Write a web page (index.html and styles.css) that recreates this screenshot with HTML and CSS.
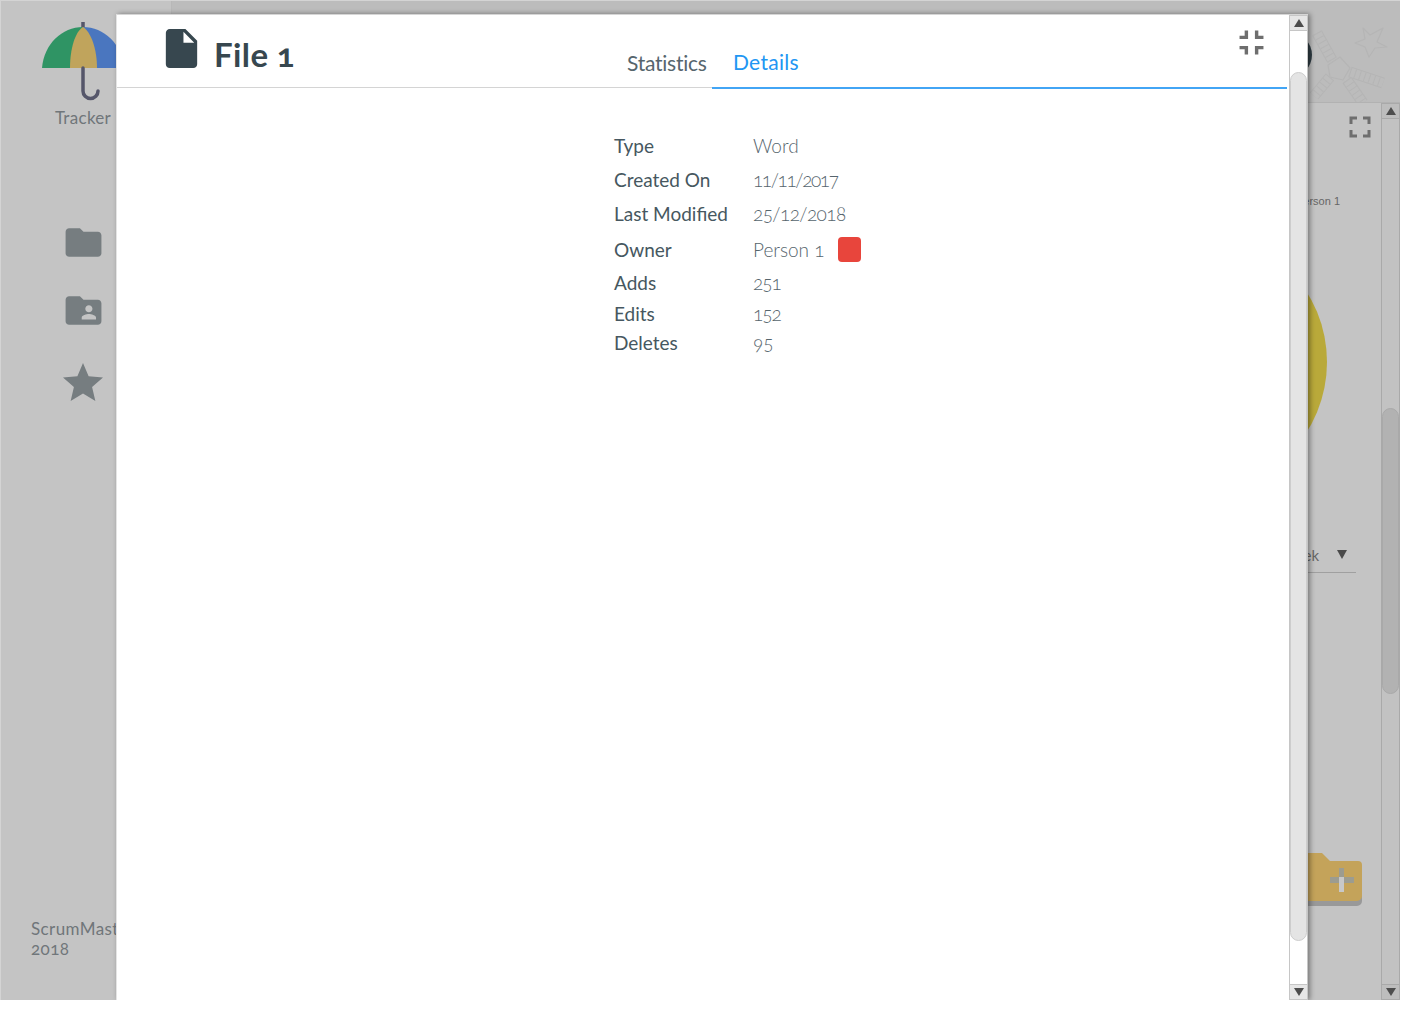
FILE: index.html
```html
<!DOCTYPE html>
<html lang="en">

<head>
    <meta charset="UTF-8">
    <title>Tracker</title>
    <link rel="stylesheet" href="styles.css">
</head>

<body>
    <div class="page">
        <aside class="sidebar">
            <div class="brand">
                <svg class="umbrella" viewBox="0 0 84 80">
                    <path d="M41 0V8" class="handle" />
                    <path d="M0 46C2 22 20 5 41 5L41 46Z" fill="#2f9464" />
                    <path d="M82 46C80 22 62 5 41 5L41 46Z" fill="#4a76bf" />
                    <path d="M28 46C28 27 33 10 41 5C49 10 55 27 55 46Z" fill="#c0a45c" />
                    <path d="M41 46V69a7.5 7.5 0 0 0 15 0" class="handle" />
                </svg>
                <div class="brand-name">Tracker</div>
            </div>
            <nav class="side-nav">
                <svg class="nav-icon" viewBox="0 0 24 24"><path d="M10 4H4c-1.1 0-1.99.9-1.99 2L2 18c0 1.1.9 2 2 2h16c1.1 0 2-.9 2-2V8c0-1.1-.9-2-2-2h-8l-2-2z" /></svg>
                <svg class="nav-icon" viewBox="0 0 24 24"><path d="M20 6h-8l-2-2H4c-1.1 0-1.99.9-1.99 2L2 18c0 1.1.9 2 2 2h16c1.1 0 2-.9 2-2V8c0-1.1-.9-2-2-2zm-5 3c1.1 0 2 .9 2 2s-.9 2-2 2-2-.9-2-2 .9-2 2-2zm4 8h-8v-1c0-1.33 2.67-2 4-2s4 .67 4 2v1z" /></svg>
                <svg class="nav-icon star" viewBox="0 0 24 24"><path d="M12 17.27L18.18 21l-1.64-7.03L22 9.24l-7.19-.61L12 2 9.19 8.63 2 9.24l5.46 4.73L5.82 21z" /></svg>
            </nav>
            <div class="copyright">ScrumMaster<br>2018</div>
        </aside>

        <main class="main">
            <header class="topbar">
                <div class="avatar"></div>
                <svg class="doodle" viewBox="0 0 85 82">
                    <path class="rail" d="M7 13L22 40M40 52L73 63M37 60L53 83M20 57L4 76" />
                    <path class="rail-inner" d="M7 13L22 40M40 52L73 63M37 60L53 83M20 57L4 76" />
                    <path class="rung" d="M7 13L22 40M40 52L73 63M37 60L53 83M20 57L4 76" />
                    <path class="outline" d="M30 37L40 48L33 60L20 57L18 45Z" />
                    <path class="outline" d="M53 8L60 15L73 8L67 22L77 27L65 28L59 37L55 27L45 23L55 19Z" />
                </svg>
            </header>
            <div class="main-body">
                <section class="dashboard">
                    <svg class="expand-icon" viewBox="0 0 24 24"><path d="M7 14H5v5h5v-2H7v-3zm-2-4h2V7h3V5H5v5zm12 7h-3v2h5v-5h-2v3zM14 5v2h3v3h2V5h-5z" /></svg>
                    <div class="legend">Person 1</div>
                    <div class="pie"></div>
                    <div class="period">
                        <span>Last week</span>
                        <span class="period-arrow"></span>
                    </div>
                    <svg class="add-folder" viewBox="0 0 72 53">
                        <path d="M6 5H32L41 13H68a4 4 0 0 1 4 4V48a5 5 0 0 1 -5 5H6Z" fill="#999" />
                        <path d="M6 0H32L40 8H68a4 4 0 0 1 4 4V43a5 5 0 0 1 -5 5H6Z" fill="#c4a35a" />
                        <rect x="49" y="15" width="5" height="24" fill="#c8c8c8" />
                        <rect x="49" y="15" width="5" height="9" fill="#9c9c90" />
                        <rect x="40" y="24" width="9" height="6" fill="#9c9c90" />
                        <rect x="54" y="24" width="10" height="6" fill="#9c9c90" />
                    </svg>
                </section>
                <div class="scrollbar scrollbar-back">
                    <div class="scroll-btn"><span class="arrow-up"></span></div>
                    <div class="scroll-track">
                        <div class="scroll-thumb"></div>
                    </div>
                    <div class="scroll-btn"><span class="arrow-down"></span></div>
                </div>
            </div>
        </main>

        <div class="modal">
            <div class="modal-content">
                <header class="modal-header">
                    <div class="modal-title">
                        <svg class="file-icon" viewBox="0 0 24 24"><path d="M6 2c-1.1 0-1.99.9-1.99 2L4 20c0 1.1.89 2 1.99 2H18c1.1 0 2-.9 2-2V8l-6-6H6zm7 7V3.5L18.5 9H13z" /></svg>
                        <h1>File 1</h1>
                    </div>
                    <div class="tabs">
                        <button class="tab">Statistics</button>
                        <button class="tab active">Details</button>
                    </div>
                    <svg class="collapse-icon" viewBox="0 0 24 24"><path d="M5 16h3v3h2v-5H5v2zm3-8H5v2h5V5H8v3zm6 11h2v-3h3v-2h-5v5zm2-11V5h-2v5h5V8h-3z" /></svg>
                </header>
                <table class="details">
                    <tr class="row-type"><th>Type</th><td>Word</td></tr>
                    <tr class="row-created"><th>Created On</th><td>11/11/2017</td></tr>
                    <tr class="row-modified"><th>Last Modified</th><td>25/12/2018</td></tr>
                    <tr class="row-owner"><th>Owner</th><td><div class="owner">Person 1<span class="owner-color"></span></div></td></tr>
                    <tr class="row-adds"><th>Adds</th><td>251</td></tr>
                    <tr class="row-edits"><th>Edits</th><td>152</td></tr>
                    <tr class="row-deletes"><th>Deletes</th><td>95</td></tr>
                </table>
            </div>
            <div class="scrollbar scrollbar-modal">
                <div class="scroll-btn"><span class="arrow-up"></span></div>
                <div class="scroll-track">
                    <div class="scroll-thumb"></div>
                </div>
                <div class="scroll-btn"><span class="arrow-down"></span></div>
            </div>
        </div>
    </div>
</body>

</html>
```
FILE: styles.css
```css
:root {
    --backdrop: #c4c4c4;
    --backdrop-dark: #bcbcbc;
    --doodle: #b5b5b5;
    --icon-grey: #767d80;
    --ink: #37474f;
    --ink-label: #465760;
    --ink-light: #56656d;
    --blue: #42a5f5;
    --tab-blue: #2196f3;
}

* {
    box-sizing: border-box;
}

html,
body {
    margin: 0;
    height: 100%;
    background: #fff;
    overflow: hidden;
}

body {
    font-family: Lato, "Open Sans", sans-serif;
    font-feature-settings: "onum";
}

.page {
    position: relative;
    display: flex;
    width: 1400px;
    height: 1000px;
    background: var(--backdrop);
    border-left: 1px solid #d4d4d4;
    border-top: 1px solid #d4d4d4;
    overflow: hidden;
}

/* left menu, mostly covered by the modal */
.sidebar {
    display: flex;
    flex-direction: column;
    align-items: center;
    width: 171px;
    flex-shrink: 0;
    padding: 21px 6px 0 0;
    border-right: 1px solid #b8b8b8;
}

.brand {
    display: flex;
    flex-direction: column;
    align-items: center;
}

.umbrella {
    width: 84px;
    height: 80px;
    margin-left: 2px;
}

.handle {
    fill: none;
    stroke: #55566a;
    stroke-width: 3.5;
    stroke-linecap: round;
}

.brand-name {
    margin-top: 5px;
    font-size: 17px;
    line-height: 22px;
    letter-spacing: .3px;
    color: #70767a;
}

.side-nav {
    display: flex;
    flex-direction: column;
    align-items: center;
    gap: 25px;
    margin-top: 92px;
}

.nav-icon {
    width: 43px;
    height: 43px;
    fill: var(--icon-grey);
}

.nav-icon.star {
    width: 48px;
    height: 48px;
    margin-top: 2px;
}

.copyright {
    align-self: flex-start;
    margin: auto 0 41px 30px;
    font-size: 17px;
    line-height: 20px;
    letter-spacing: .4px;
    white-space: nowrap;
    color: #70767a;
}

.main {
    display: flex;
    flex-direction: column;
    flex: 1;
    min-width: 0;
}

.topbar {
    display: flex;
    justify-content: flex-end;
    height: 102px;
    flex-shrink: 0;
    background: var(--backdrop-dark);
    border-bottom: 1px solid #b2b2b2;
}

.avatar {
    width: 44px;
    height: 44px;
    margin: 32px -2px 0 0;
    border-radius: 50%;
    background: #2f3d44;
}

.doodle {
    align-self: flex-end;
    width: 85px;
    height: 82px;
    margin-right: 5px;
    fill: none;
}

.rail {
    stroke: var(--doodle);
    stroke-width: 11;
}

.rail-inner {
    stroke: var(--backdrop-dark);
    stroke-width: 9;
}

.rung {
    stroke: var(--doodle);
    stroke-width: 9;
    stroke-dasharray: 1 4;
}

.outline {
    stroke: var(--doodle);
    stroke-width: 1.2;
    stroke-linejoin: round;
}

.main-body {
    display: flex;
    flex: 1;
    min-height: 0;
}

.dashboard {
    display: flex;
    flex-direction: column;
    align-items: flex-end;
    flex: 1;
    min-width: 0;
}

.expand-icon {
    width: 36px;
    height: 36px;
    margin: 6px 3px 0 0;
    fill: #6e6e6e;
}

.legend {
    margin: 49px 41px 0 0;
    font-family: "Liberation Sans", sans-serif;
    font-size: 11px;
    line-height: 14px;
    color: #666;
}

.pie {
    width: 262px;
    height: 262px;
    margin: 23px 54px 0 0;
    border-radius: 50%;
    background: #b9a93a;
}

.period {
    display: flex;
    align-items: center;
    gap: 18px;
    width: 200px;
    height: 32px;
    margin: 48px 25px 0 0;
    padding: 0 9px 4px 0;
    justify-content: flex-end;
    border-bottom: 1px solid #a0a0a0;
    font-size: 15px;
    color: #666;
}

.period-arrow {
    width: 0;
    height: 0;
    border-left: 5px solid transparent;
    border-right: 5px solid transparent;
    border-top: 9px solid #4a4a4a;
}

.add-folder {
    width: 72px;
    height: 53px;
    margin: 280px 19px 0 0;
}

/* scrollbars */
.scrollbar {
    display: flex;
    flex-direction: column;
    flex-shrink: 0;
    width: 19px;
    border: 1px solid #a9a9a9;
    border-width: 0 1px;
}

.scroll-btn {
    display: flex;
    align-items: center;
    justify-content: center;
    height: 16px;
    flex-shrink: 0;
}

.arrow-up,
.arrow-down {
    width: 0;
    height: 0;
    border-left: 5px solid transparent;
    border-right: 5px solid transparent;
}

.arrow-up {
    border-bottom: 8px solid #4d4d4d;
}

.arrow-down {
    border-top: 8px solid #4d4d4d;
}

.scroll-track {
    flex: 1;
}

.scroll-thumb {
    border-radius: 9px;
}

.scrollbar-back {
    background: #c2c2c2;
}

.scrollbar-back .scroll-btn {
    background: #bdbdbd;
    border: 1px solid #a9a9a9;
    border-width: 1px 0;
}

.scrollbar-back .scroll-thumb {
    height: 286px;
    margin-top: 289px;
    background: #b2b2b2;
    border: 1px solid #a9a9a9;
}

.modal {
    position: absolute;
    top: 13px;
    left: 115px;
    bottom: 0;
    display: flex;
    width: 1192px;
    background: #fff;
    border-top: 1px solid #d6d6d6;
    border-left: 1px solid #e4e4e4;
    box-shadow: 2px 0 5px rgba(0, 0, 0, .4);
}

.modal-content {
    flex: 1;
    min-width: 0;
}

.scrollbar-modal {
    background: #fff;
    border-color: #c6c6c6;
}

.scrollbar-modal .scroll-btn {
    background: #e6e6e6;
    border: 1px solid #c6c6c6;
    border-width: 1px 0;
}

.scrollbar-modal .scroll-thumb {
    height: 869px;
    margin-top: 41px;
    background: #e4e4e4;
    border: 1px solid #cdcdcd;
}

.modal-header {
    position: relative;
    display: flex;
    height: 73px;
    margin-right: 2px;
    border-bottom: 1px solid #d4d4d4;
}

.modal-title {
    display: flex;
    align-items: flex-start;
    width: 509px;
    height: 100%;
    padding: 10px 0 0 41px;
    flex-shrink: 0;
}

.file-icon {
    width: 47px;
    height: 47px;
    fill: var(--ink);
}

.modal-title h1 {
    margin: 9px 0 0 9px;
    font-size: 33px;
    line-height: 40px;
    font-weight: 700;
    letter-spacing: .4px;
    color: var(--ink);
}

.tabs {
    display: flex;
    flex: 1;
}

.tab {
    display: flex;
    align-items: flex-end;
    height: 73px;
    padding: 0 0 12px 1px;
    border: 0;
    background: none;
    font-family: inherit;
    font-size: 21px;
    line-height: 26px;
    letter-spacing: -.25px;
    color: var(--ink-light);
}

.tab:first-child {
    width: 86px;
}

.tab.active {
    flex: 1;
    height: 74px;
    padding: 0 0 12px 21px;
    letter-spacing: .3px;
    border-bottom: 2px solid var(--blue);
    color: var(--tab-blue);
}

.collapse-icon {
    position: absolute;
    top: 7px;
    right: 15px;
    width: 41px;
    height: 41px;
    fill: #6e6e6e;
}

.details {
    margin: 41px 0 0 497px;
    border-collapse: collapse;
    font-size: 19px;
    line-height: 24px;
}

.details th {
    width: 139px;
    padding: 0;
    font-weight: 400;
    text-align: left;
    color: var(--ink-label);
}

.details td {
    padding: 0;
    font-weight: 300;
    color: var(--ink-light);
}

.row-type th,
.row-type td,
.row-created th,
.row-created td,
.row-modified th,
.row-modified td {
    height: 34px;
}

.row-created td {
    letter-spacing: -1.4px;
}

.row-modified td {
    letter-spacing: -.6px;
}

.row-owner th,
.row-owner td {
    height: 37px;
}

.row-adds th,
.row-adds td {
    height: 30px;
}

.row-edits th,
.row-edits td {
    height: 32px;
}

.row-adds td,
.row-edits td {
    letter-spacing: -1px;
}

.row-deletes th,
.row-deletes td {
    height: 26px;
}

.owner {
    display: flex;
    align-items: center;
}

.owner-color {
    width: 23px;
    height: 25px;
    margin-left: 14px;
    border-radius: 4px;
    background: #e8453c;
}
```
